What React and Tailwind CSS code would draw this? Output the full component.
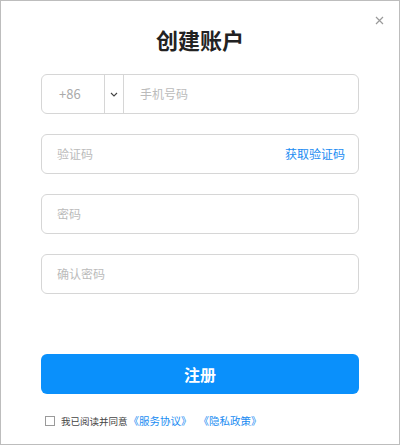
import React from "react";

const font = { fontFamily: '"Noto Sans CJK SC", "Noto Sans", sans-serif' };

export default function App() {
  return (
    <div
      className="relative w-[400px] h-[445px] border border-[#bdbdbd] bg-white flex flex-col px-[40px]"
      style={font}
    >
      <button className="absolute right-[15px] top-[14px] w-[10px] h-[10px] flex items-center justify-center text-[#9a9a9a]">
        <svg width="9" height="9" viewBox="0 0 9 9" fill="none" stroke="currentColor" strokeWidth="1.2">
          <path d="M1 1L8 8M8 1L1 8" />
        </svg>
      </button>

      <h1 className="pt-[23px] h-[53px] text-center text-[22px] leading-[30px] font-bold text-[#222]">
        创建账户
      </h1>

      <div className="mt-[20px] flex flex-col gap-[20px]">
        <div className="h-[40px] flex items-stretch border border-[#d6d6d6] rounded-[6px]">
          <div className="w-[62px] flex items-center pl-[17px] text-[13px] text-[#aaa]">+86</div>
          <div className="w-[20px] border-x border-[#d6d6d6] flex items-center justify-center text-[#444]">
            <svg width="8" height="5" viewBox="0 0 8 5" fill="none" stroke="currentColor" strokeWidth="1.1">
              <path d="M1 1L4 4L7 1" />
            </svg>
          </div>
          <div className="flex items-center pl-[16px] text-[12px] text-[#bbb]">手机号码</div>
        </div>

        <div className="h-[40px] flex items-center justify-between border border-[#d6d6d6] rounded-[6px] pl-[15px] pr-[13px]">
          <span className="text-[12px] text-[#bbb]">验证码</span>
          <span className="text-[12px] text-[#1a8cf2]">获取验证码</span>
        </div>

        <div className="h-[40px] flex items-center border border-[#d6d6d6] rounded-[6px] pl-[15px]">
          <span className="text-[12px] text-[#bbb]">密码</span>
        </div>

        <div className="h-[40px] flex items-center border border-[#d6d6d6] rounded-[6px] pl-[15px]">
          <span className="text-[12px] text-[#bbb]">确认密码</span>
        </div>
      </div>

      <button className="mt-[60px] h-[40px] w-full rounded-[6px] bg-[#0a90fb] text-white text-[16px] font-bold flex items-center justify-center">
        注册
      </button>

      <div className="mt-[21px] flex items-center pl-[4px]">
        <span className="w-[10px] h-[10px] border border-[#9a9a9a] bg-white"></span>
        <span className="ml-[6px] text-[9.5px] leading-[12px] text-[#444]">我已阅读并同意</span>
        <span className="ml-[1px] text-[10.5px] leading-[12px] text-[#1a8cf2]">《服务协议》</span>
        <span className="ml-[7px] text-[10.5px] leading-[12px] text-[#1a8cf2]">《隐私政策》</span>
      </div>
    </div>
  );
}
